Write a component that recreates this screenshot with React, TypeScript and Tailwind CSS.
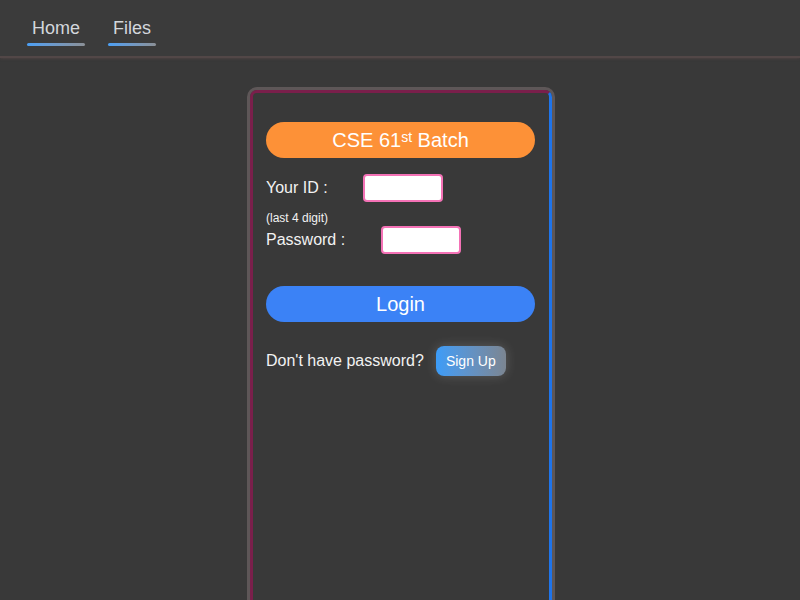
export default function App() {
  const links = ['Home', 'Files'];

  return (
    <div className="min-h-screen h-[600px] overflow-hidden bg-[#393939] font-['Liberation_Sans',Arial,sans-serif]">
      {/* top nav */}
      <header className="h-[58px] bg-[#3b3b3b] border-b-2 border-[#524747] shadow-[0_0_3px_rgba(110,80,80,0.6)]">
        <nav className="flex gap-[23px] pl-[27px] pt-[18px]">
          {links.map((l) => (
            <a key={l} href="#" className="flex flex-col items-center">
              <span className="px-[5px] text-[18px] leading-[21px] text-[#d3d7dc]">{l}</span>
              <span className="mt-[4px] h-[3px] w-full rounded-full bg-gradient-to-r from-[#4a9ff5] to-[#8b9096]" />
            </a>
          ))}
        </nav>
      </header>

      <main className="flex justify-center pt-[29px] pl-[2px]">
        <div className="w-[308px] h-[600px] rounded-[10px] border-[3px] border-[#5e5758]">
          <div className="h-full rounded-[7px] border-[3px] border-[#7a1f4b] border-r-[#1f74ea] pl-[13px] pr-[14px] pt-[29px]">
            <div className="flex h-[36px] items-center justify-center rounded-full bg-[#fd9137] text-[20px] text-white">
              CSE 61<sup className="text-[14px] relative -top-[3px]">st</sup>&nbsp;Batch
            </div>

            <div className="mt-[16px] flex items-center">
              <label className="w-[97px] text-[16px] text-[#f2f2f2]">Your ID :</label>
              <input className="h-[28px] w-[80px] rounded-[4px] border-2 border-[#f472b6] bg-white outline-none" />
            </div>
            <div className="mt-[9px] text-[12px] leading-[14px] text-[#f2f2f2]">(last 4 digit)</div>
            <div className="mt-[1px] flex items-center">
              <label className="w-[115px] text-[16px] text-[#f2f2f2]">Password :</label>
              <input type="password" className="h-[28px] w-[80px] rounded-[4px] border-2 border-[#f472b6] bg-white outline-none" />
            </div>

            <button className="mt-[32px] flex h-[36px] w-full items-center justify-center rounded-full bg-[#3b82f6] text-[20px] text-white">
              Login
            </button>

            <div className="mt-[24px] flex items-center gap-[12px]">
              <span className="text-[16px] text-[#f2f2f2]">Don't have password?</span>
              <button className="h-[30px] w-[70px] rounded-[8px] bg-gradient-to-r from-[#3b9cf8] to-[#7b8591] text-[14px] text-white shadow-[0_0_12px_rgba(255,255,255,0.18)]">
                Sign Up
              </button>
            </div>
          </div>
        </div>
      </main>
    </div>
  );
}
